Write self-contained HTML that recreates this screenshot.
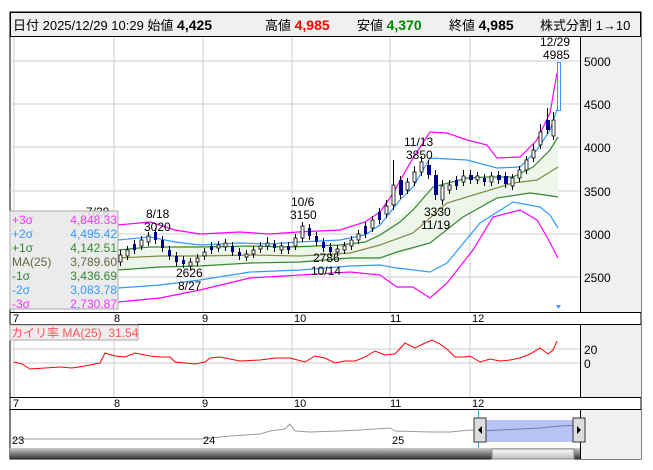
<!DOCTYPE html><html><head><meta charset="utf-8"><style>
body{margin:0;background:#fff;width:653px;height:470px;overflow:hidden;font-family:"Liberation Sans","Noto Sans CJK JP",sans-serif}
svg{position:absolute;left:0;top:0}
</style></head><body>
<svg width="653" height="470" xmlns="http://www.w3.org/2000/svg" font-family="Liberation Sans, Noto Sans CJK JP, sans-serif">
<rect x="10" y="12" width="631" height="447" fill="#fff" stroke="#000"/>
<rect x="10.5" y="12.5" width="630" height="24" fill="#f0f0f0" stroke="#000"/>
<text y="30" font-size="13" fill="#000"><tspan x="13">日付 2025/12/29 10:29 始値 </tspan><tspan font-weight="bold" font-size="14">4,425</tspan><tspan x="265">高値 </tspan><tspan fill="#f00" font-weight="bold" font-size="14">4,985</tspan><tspan x="357">安値 </tspan><tspan fill="#080" font-weight="bold" font-size="14">4,370</tspan><tspan x="449">終値 </tspan><tspan font-weight="bold" font-size="14">4,985</tspan><tspan x="540">株式分割 1→10</tspan></text>
<rect x="580" y="37" width="61" height="275" fill="#f0f0f0"/>
<rect x="580" y="325" width="61" height="72" fill="#f0f0f0"/>
<rect x="580" y="410" width="61" height="49" fill="#f0f0f0"/>
<g stroke="#ccc" stroke-width="1">
<line x1="10" y1="61" x2="580" y2="61"/><line x1="10" y1="104" x2="580" y2="104"/><line x1="10" y1="147" x2="580" y2="147"/><line x1="10" y1="191" x2="580" y2="191"/><line x1="10" y1="234" x2="580" y2="234"/><line x1="10" y1="277" x2="580" y2="277"/>
<line x1="14" y1="37" x2="14" y2="312"/><line x1="114" y1="37" x2="114" y2="312"/><line x1="203" y1="37" x2="203" y2="312"/><line x1="292" y1="37" x2="292" y2="312"/><line x1="390" y1="37" x2="390" y2="312"/><line x1="470" y1="37" x2="470" y2="312"/>
<line x1="14" y1="325" x2="14" y2="397"/><line x1="114" y1="325" x2="114" y2="397"/><line x1="203" y1="325" x2="203" y2="397"/><line x1="292" y1="325" x2="292" y2="397"/><line x1="390" y1="325" x2="390" y2="397"/><line x1="470" y1="325" x2="470" y2="397"/>
<line x1="10" y1="349" x2="580" y2="349"/><line x1="10" y1="363" x2="580" y2="363"/>
</g>
<line x1="580.5" y1="37" x2="580.5" y2="312" stroke="#000"/>
<line x1="580.5" y1="325" x2="580.5" y2="397" stroke="#000"/>
<line x1="10" y1="312.5" x2="641" y2="312.5" stroke="#000"/>
<line x1="10" y1="324.5" x2="641" y2="324.5" stroke="#000"/>
<line x1="10" y1="397.5" x2="641" y2="397.5" stroke="#000"/>
<line x1="10" y1="409.5" x2="641" y2="409.5" stroke="#000"/>
<line x1="580.5" y1="410" x2="580.5" y2="459" stroke="#000"/>
<g font-size="11" fill="#000"><text x="13" y="322">7</text><text x="114" y="322">8</text><text x="202" y="322">9</text><text x="294" y="322">10</text><text x="390" y="322">11</text><text x="472" y="322">12</text>
<text x="13" y="407">7</text><text x="114" y="407">8</text><text x="202" y="407">9</text><text x="294" y="407">10</text><text x="390" y="407">11</text><text x="472" y="407">12</text></g>
<g font-size="12" fill="#000"><text x="584" y="66">5000</text><text x="584" y="109">4500</text><text x="584" y="152">4000</text><text x="584" y="196">3500</text><text x="584" y="239">3000</text><text x="584" y="282">2500</text>
<text x="584" y="354">20</text><text x="584" y="368">0</text></g>
<path d="M118,250 L200,247 L290,247 L340,245 L370,240 L400,215 L433,187 L467,178 L513,177 L533,167 L550,150 L558,137 L558,197 L530,193 L497,198 L463,217 L430,243 L400,255 L370,262 L300,262 L200,266 L118,270Z" fill="#eef5ea"/>
<g fill="none" stroke-width="1.2">
<polyline stroke="#f0f" points="118,225 150,222 175,230 200,234 240,232 270,234 298,232 340,230 365,222 380,212 392,195 413,158 430,132 447,133 467,140 487,145 497,158 520,157 537,140 550,113 557,73"/>
<polyline stroke="#39f" points="118,240 150,237 175,242 200,245 240,243 270,244 298,242 340,240 365,235 380,225 400,200 413,187 430,158 467,160 497,168 520,167 537,150 550,130 558,107"/>
<polyline stroke="#383" points="118,250 150,247 200,247 250,246 290,247 340,245 365,242 380,235 400,222 413,210 433,187 467,178 487,177 513,177 533,167 550,150 558,137"/>
<polyline stroke="#884" points="118,258 160,256 200,256 250,255 300,256 350,253 380,245 413,233 447,203 480,193 513,183 537,180 558,167"/>
<polyline stroke="#383" points="118,270 160,267 200,266 250,263 300,262 350,258 380,258 397,252 430,243 463,217 497,198 530,193 545,195 558,197"/>
<polyline stroke="#39f" points="118,288 160,285 200,280 250,272 300,270 350,266 380,265 397,268 430,272 447,263 480,223 513,202 540,207 550,215 558,228"/>
<polyline stroke="#f0f" points="118,302 160,298 200,290 250,278 300,275 350,272 380,275 397,287 413,287 430,298 447,283 473,250 493,217 520,210 537,220 547,237 558,258"/>
</g>
<path fill="none" stroke="#000" d="M120.5,250V266M127.5,246V260M134.5,240V254M141.5,236V250M148.5,232V246M155.5,228V244M162.5,236V252M169.5,246V260M176.5,252V266M183.5,256V268M190.5,258V270M197.5,254V266M204.5,248V260M211.5,242V254M218.5,241V252M225.5,239V251M232.5,242V256M239.5,248V260M246.5,250V261M253.5,246V258M260.5,242V253M267.5,237V250M274.5,240V252M281.5,242V254M288.5,242V254M295.5,234V250M302.5,222V242M309.5,224V240M316.5,232V246M323.5,238V252M330.5,243V256M337.5,245V256M344.5,242V254M351.5,236V250M358.5,230V244M365.5,222V238M372.5,216V232M379.5,208V224M386.5,200V218M393.5,160V210M400.5,176V199M407.5,178V194M414.5,166V186M421.5,156V176M428.5,160V179M435.5,170V200M442.5,180V205M449.5,180V194M456.5,176V190M463.5,170V186M470.5,170V184M477.5,172V184M484.5,174V186M491.5,172V186M498.5,171V184M505.5,172V188M512.5,174V190M519.5,166V182M526.5,156V174M533.5,144V162M540.5,124V149M547.5,108V134M553.5,112V140"/>
<g fill="#fff" stroke="#000" stroke-width="0.8">
<rect x="119" y="255" width="3" height="7"/><rect x="126" y="250" width="3" height="6"/><rect x="140" y="240" width="3" height="6"/><rect x="147" y="236" width="3" height="6"/><rect x="189" y="262" width="3" height="4"/><rect x="196" y="258" width="3" height="4"/><rect x="203" y="252" width="3" height="4"/><rect x="217" y="245" width="3" height="3"/><rect x="224" y="243" width="3" height="4"/><rect x="245" y="254" width="3" height="3"/><rect x="252" y="250" width="3" height="4"/><rect x="259" y="246" width="3" height="3"/><rect x="266" y="243" width="3" height="3"/><rect x="280" y="246" width="3" height="4"/><rect x="294" y="238" width="3" height="8"/><rect x="301" y="226" width="3" height="12"/><rect x="336" y="249" width="3" height="3"/><rect x="343" y="246" width="3" height="4"/><rect x="350" y="240" width="3" height="6"/><rect x="357" y="234" width="3" height="6"/><rect x="371" y="220" width="3" height="8"/><rect x="385" y="206" width="3" height="8"/><rect x="392" y="185" width="3" height="20"/><rect x="406" y="182" width="3" height="8"/><rect x="413" y="172" width="3" height="10"/><rect x="420" y="162" width="3" height="10"/><rect x="441" y="186" width="3" height="14"/><rect x="448" y="185" width="3" height="5"/><rect x="462" y="176" width="3" height="6"/><rect x="476" y="176" width="3" height="4"/><rect x="490" y="176" width="3" height="6"/><rect x="511" y="178" width="3" height="8"/><rect x="518" y="170" width="3" height="8"/><rect x="525" y="160" width="3" height="10"/><rect x="532" y="150" width="3" height="8"/><rect x="539" y="132" width="3" height="13"/><rect x="552" y="120" width="3" height="16"/>
</g>
<g fill="#00008b">
<rect x="133" y="244" width="3" height="6"/><rect x="154" y="232" width="3" height="8"/><rect x="161" y="240" width="3" height="8"/><rect x="168" y="250" width="3" height="6"/><rect x="175" y="256" width="3" height="6"/><rect x="182" y="260" width="3" height="4"/><rect x="210" y="246" width="3" height="4"/><rect x="231" y="246" width="3" height="6"/><rect x="238" y="252" width="3" height="4"/><rect x="273" y="244" width="3" height="4"/><rect x="287" y="246" width="3" height="4"/><rect x="308" y="228" width="3" height="8"/><rect x="315" y="236" width="3" height="6"/><rect x="322" y="242" width="3" height="6"/><rect x="329" y="247" width="3" height="5"/><rect x="364" y="226" width="3" height="8"/><rect x="378" y="212" width="3" height="8"/><rect x="399" y="180" width="4" height="15"/><rect x="427" y="165" width="4" height="10"/><rect x="434" y="175" width="4" height="20"/><rect x="455" y="180" width="3" height="6"/><rect x="469" y="175" width="4" height="5"/><rect x="483" y="178" width="3" height="4"/><rect x="497" y="175" width="4" height="5"/><rect x="504" y="176" width="4" height="8"/><rect x="546" y="120" width="4" height="10"/>
</g>
<rect x="557.5" y="62.5" width="3" height="48" fill="#fff" stroke="#39f"/>
<path d="M556,305 l5,0 l-2.5,4z" fill="#39f"/>
<g font-size="12" fill="#000">
<text x="86" y="216">7/28</text>
<text x="146" y="218">8/18</text><text x="144" y="231">3020</text>
<text x="176" y="277">2626</text><text x="178" y="290">8/27</text>
<text x="291" y="206">10/6</text><text x="290" y="219">3150</text>
<text x="313" y="262">2786</text><text x="311" y="275">10/14</text>
<text x="404" y="146">11/13</text><text x="406" y="159">3850</text>
<text x="424" y="216">3330</text><text x="421" y="229">11/19</text>
<text x="540" y="46">12/29</text><text x="543" y="59">4985</text>
</g>
<rect x="10" y="211" width="108" height="98" fill="#e8e8e8" fill-opacity="0.85" stroke="#aaa"/>
<g font-size="12">
<text x="12" y="224" fill="#f3f">+3σ</text><text x="117" y="224" text-anchor="end" fill="#f3f">4,848.33</text>
<text x="12" y="238" fill="#39f">+2σ</text><text x="117" y="238" text-anchor="end" fill="#39f">4,495.42</text>
<text x="12" y="252" fill="#383">+1σ</text><text x="117" y="252" text-anchor="end" fill="#383">4,142.51</text>
<text x="12" y="266" fill="#664">MA(25)</text><text x="117" y="266" text-anchor="end" fill="#664">3,789.60</text>
<text x="12" y="280" fill="#383">-1σ</text><text x="117" y="280" text-anchor="end" fill="#383">3,436.69</text>
<text x="12" y="294" fill="#39f">-2σ</text><text x="117" y="294" text-anchor="end" fill="#39f">3,083.78</text>
<text x="12" y="308" fill="#f3f">-3σ</text><text x="117" y="308" text-anchor="end" fill="#f3f">2,730.87</text>
</g>
<polyline fill="none" stroke="#f00" stroke-width="1" points="14,362 22,364 30,369 45,368 60,367 72,368 85,366 95,364 100,363 105,353 115,356 125,357 135,353 150,356 160,357 170,357 175,362 195,364 205,362 210,358 220,357 240,361 260,360 275,358 290,358 305,362 315,356 325,358 335,363 345,361 355,361 365,357 375,351 385,355 395,354 405,343 415,348 425,343 432,340 440,344 448,350 455,357 465,357 470,356 480,362 490,359 500,361 510,360 520,358 530,354 540,348 548,354 553,350 557,341"/>
<rect x="10" y="325" width="128" height="15" fill="#eee" stroke="#aaa"/>
<text x="11" y="337" font-size="12" fill="#f55">カイリ率 MA(25)&#160;&#160;31.54</text>
<rect x="479" y="420" width="101" height="22" fill="#b8c4f4"/>
<polyline fill="none" stroke="#999" points="12,439 100,439 200,439 230,436 260,434 270,431 285,429 290,424 295,431 310,432 340,431 360,430 390,428 395,431 430,432 450,432 470,430 479,431"/>
<polyline fill="none" stroke="#77a" points="479,431 500,430 520,429 540,428 560,426 580,425"/>
<line x1="478.5" y1="410" x2="478.5" y2="448" stroke="#3ae"/>
<rect x="474" y="418" width="12" height="24" fill="#ddd" stroke="#333"/><path d="M482,426 l-4,4 l4,4z" fill="#000"/>
<rect x="573" y="418" width="12" height="24" fill="#ddd" stroke="#333"/><path d="M577,426 l4,4 l-4,4z" fill="#000"/>
<g font-size="11" fill="#000"><text x="12" y="444">23</text><text x="203" y="444">24</text><text x="392" y="444">25</text></g>
<defs><linearGradient id="g" x1="0" y1="0" x2="0" y2="1"><stop offset="0" stop-color="#ccc"/><stop offset="1" stop-color="#333"/></linearGradient>
<linearGradient id="h" x1="0" y1="0" x2="0" y2="1"><stop offset="0" stop-color="#fff"/><stop offset="1" stop-color="#bbb"/></linearGradient></defs>
<rect x="10" y="448" width="570" height="11" fill="url(#g)"/>
<rect x="492" y="449" width="82" height="10" fill="url(#h)" stroke="#888"/>
</svg>
</body></html>
